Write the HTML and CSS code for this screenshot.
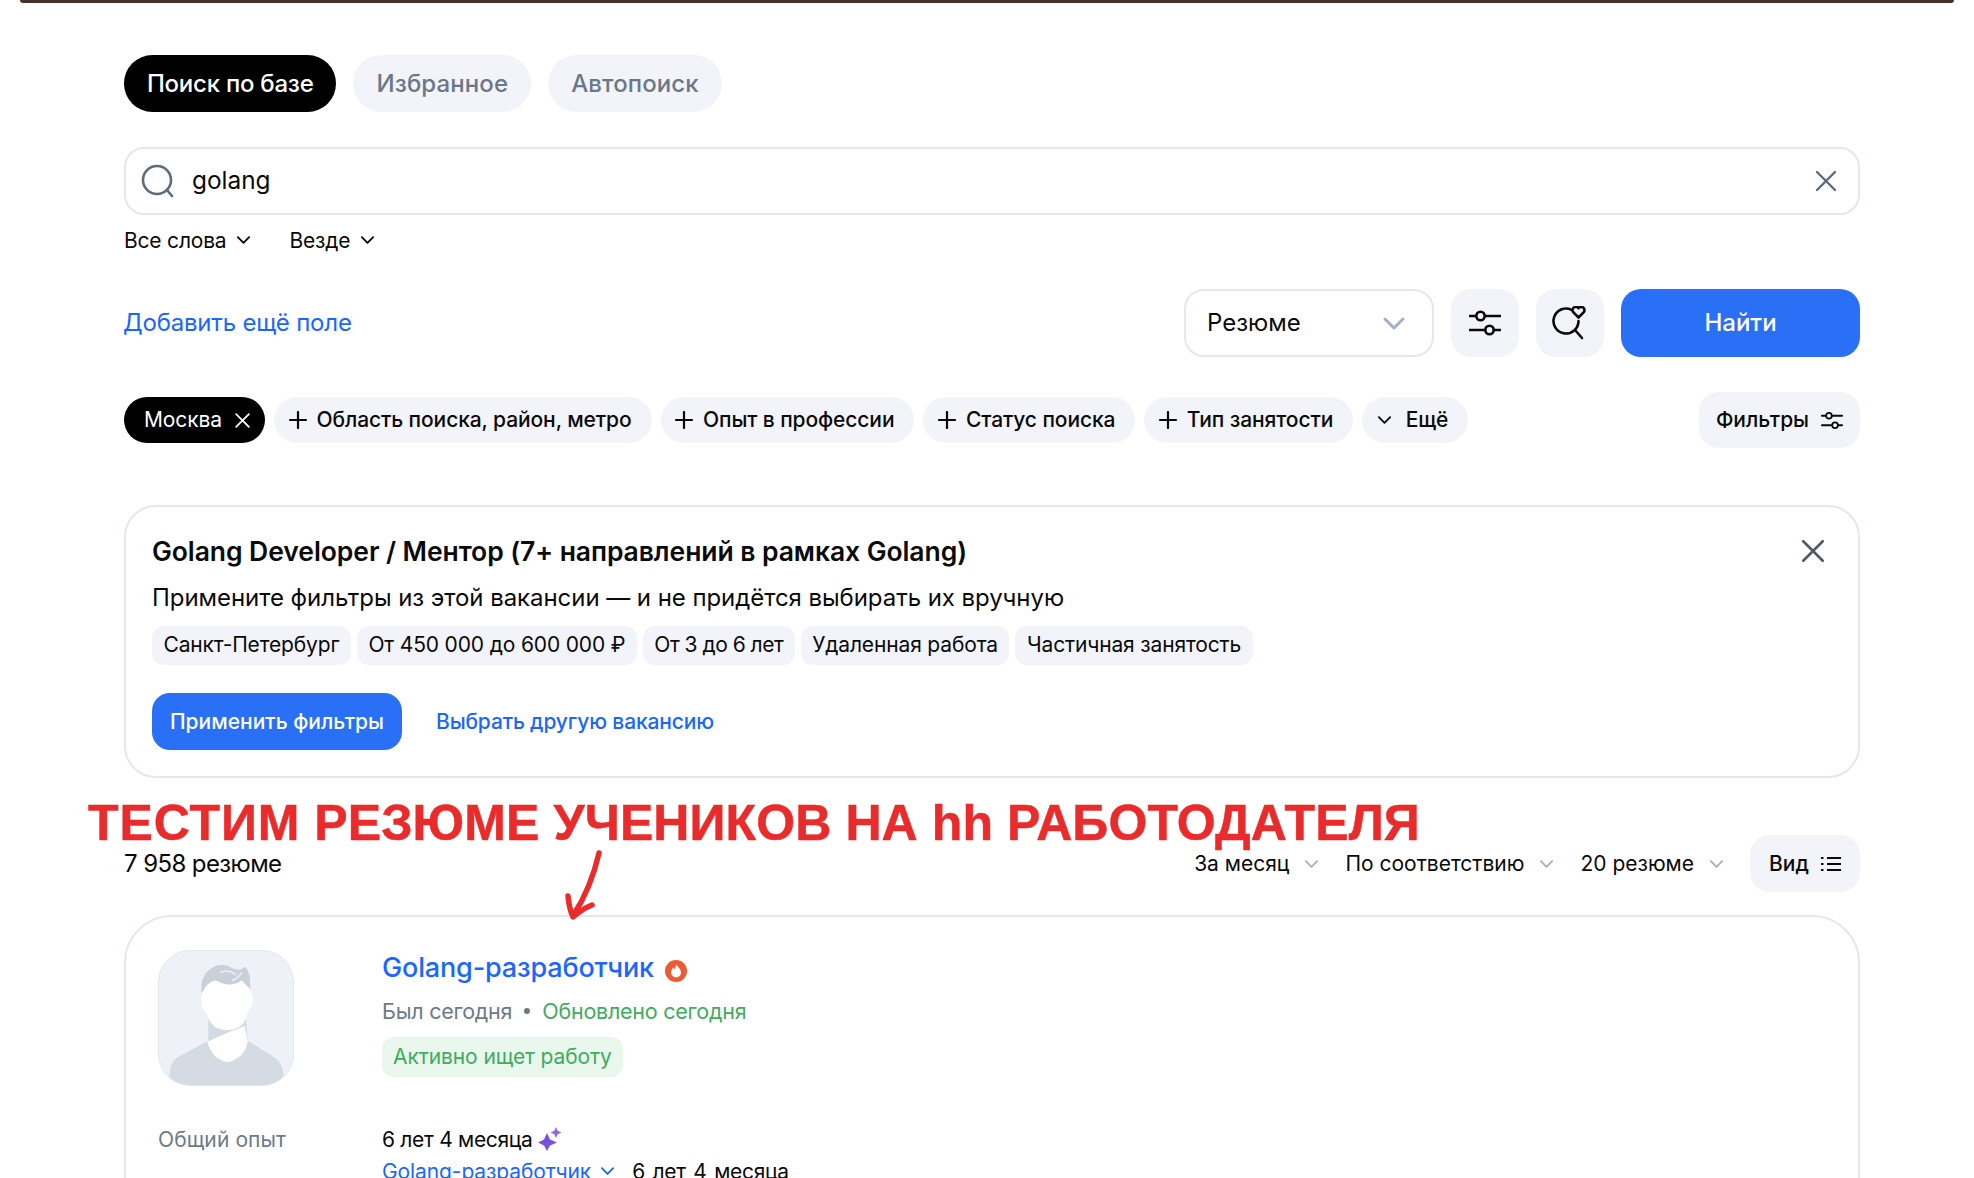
FILE: index.html
```html
<!DOCTYPE html>
<html lang="ru">
<head>
    <meta charset="UTF-8">
    <title>Поиск по базе</title>
    <link rel="stylesheet" href="styles.css">
</head>
<body>
<svg class="sprite" width="0" height="0">
    <symbol id="chev" viewBox="0 0 16 10"><path d="M2 2l6 6 6-6" fill="none" stroke="currentColor" stroke-width="2" stroke-linecap="round" stroke-linejoin="round"/></symbol>
    <symbol id="cross" viewBox="0 0 24 24"><path d="M3 3l18 18M21 3L3 21" fill="none" stroke="currentColor" stroke-width="2.4" stroke-linecap="round"/></symbol>
    <symbol id="plus" viewBox="0 0 18 18"><path d="M9 1v16M1 9h16" fill="none" stroke="currentColor" stroke-width="2.2" stroke-linecap="round"/></symbol>
    <symbol id="sliders" viewBox="0 0 32 28"><g fill="none" stroke="currentColor" stroke-width="2.6"><path d="M1 7h6M16 7h15M1 21h15M25 21h6" stroke-linecap="round"/><circle cx="11.5" cy="7" r="4.2"/><circle cx="20.5" cy="21" r="4.2"/></g></symbol>
</svg>

<div class="top-bar"></div>

<div class="page">
    <div class="tabs">
        <a class="tab tab-active">Поиск по базе</a>
        <a class="tab">Избранное</a>
        <a class="tab">Автопоиск</a>
    </div>

    <div class="search">
        <svg class="search-icon" viewBox="0 0 34 34"><g fill="none" stroke="#5d6b7b" stroke-width="2.6" stroke-linecap="round"><circle cx="16" cy="16" r="14"/><path d="M26 26l5 6"/></g></svg>
        <span class="search-text">golang</span>
        <svg class="search-clear"><use href="#cross"/></svg>
    </div>

    <div class="options">
        <span class="option">Все слова <svg class="chev-small"><use href="#chev"/></svg></span>
        <span class="option">Везде <svg class="chev-small"><use href="#chev"/></svg></span>
    </div>

    <div class="actions">
        <a class="add-field">Добавить ещё поле</a>
        <div class="select">Резюме <svg class="chev-select"><use href="#chev"/></svg></div>
        <button type="button" class="icon-btn"><svg class="icon-sliders"><use href="#sliders"/></svg></button>
        <button type="button" class="icon-btn">
            <svg class="icon-saved" viewBox="0 0 36 34"><g fill="none" stroke="#0a0a0a" stroke-width="2.6" stroke-linecap="round"><path d="M19.500 3.800A12.500 12.500 0 1 0 26.500 15"/><path d="M23 24l7 8"/><path d="M26.500 11.500l-5.300-5.300a3.100 3.100 0 0 1 5.300-4 3.100 3.100 0 0 1 5.300 4z" stroke-linejoin="round"/></g></svg>
        </button>
        <button type="button" class="find-btn">Найти</button>
    </div>

    <div class="chips">
        <span class="chip chip-city">Москва <svg class="chip-cross"><use href="#cross"/></svg></span>
        <span class="chip"><svg class="chip-plus"><use href="#plus"/></svg>Область поиска, район, метро</span>
        <span class="chip"><svg class="chip-plus"><use href="#plus"/></svg>Опыт в профессии</span>
        <span class="chip"><svg class="chip-plus"><use href="#plus"/></svg>Статус поиска</span>
        <span class="chip"><svg class="chip-plus"><use href="#plus"/></svg>Тип занятости</span>
        <span class="chip"><svg class="chip-chev"><use href="#chev"/></svg>Ещё</span>
        <button type="button" class="soft-btn filters-btn">Фильтры <svg class="icon-sliders-small"><use href="#sliders"/></svg></button>
    </div>

    <div class="card vacancy">
        <svg class="vacancy-close"><use href="#cross"/></svg>
        <div class="vacancy-title">Golang Developer / Ментор (7+ направлений в рамках Golang)</div>
        <div class="vacancy-text">Примените фильтры из этой вакансии — и не придётся выбирать их вручную</div>
        <div class="tags">
            <span class="tag">Санкт-Петербург</span>
            <span class="tag">От 450 000 до 600 000 ₽</span>
            <span class="tag tag-narrow">От 3 до 6 лет</span>
            <span class="tag">Удаленная работа</span>
            <span class="tag">Частичная занятость</span>
        </div>
        <div class="vacancy-actions">
            <button type="button" class="apply-btn">Применить фильтры</button>
            <a class="other-link">Выбрать другую вакансию</a>
        </div>
    </div>

    <div class="results">
        <span class="results-count">7 958 резюме</span>
        <span class="sort sort-period">За месяц <svg class="chev-sort"><use href="#chev"/></svg></span>
        <span class="sort">По соответствию <svg class="chev-sort"><use href="#chev"/></svg></span>
        <span class="sort">20 резюме <svg class="chev-sort"><use href="#chev"/></svg></span>
        <button type="button" class="soft-btn view-btn">Вид
            <svg class="icon-list" viewBox="0 0 20 16"><g fill="none" stroke="#0a0a0a" stroke-width="2.2"><path d="M6 2h14M6 8h14M6 14h14"/><path d="M0 2h2.500M0 8h2.500M0 14h2.500"/></g></svg>
        </button>
    </div>

    <div class="card resume">
        <div class="resume-head">
            <div class="avatar">
                <svg viewBox="0 0 136 136">
                    <path d="M50 91L22 106Q12 110 11 122L10 136H127L126 122Q124 111 114 106L90 91Z" fill="#d5dbe3"/>
                    <path d="M50 66H88L90 92 50 92Z" fill="#d5dbe3"/>
                    <path d="M49 92L72 82 87 76 90 92Q87 108 70 113 54 110 49 92Z" fill="#fff"/>
                    <path d="M43 42Q42 26 50 20 58 12 70 15 76 19 82 19L88 16 92 24 93 44 84 38 52 38Z" fill="#c9d0da"/>
                    <path d="M46 38Q52 30 58 30 72 38 84 30L92 38 95 46 95 54 90 62Q88 74 80 78 70 83 58 78 50 72 49 64 42 58 43 46Z" fill="#fff"/>
                    <path d="M62 22Q70 18 78 24M74 30Q80 28 84 22" fill="none" stroke="#eef1f7" stroke-width="1.500"/>
                </svg>
            </div>
            <div class="resume-info">
                <div class="resume-title">
                    <a>Golang-разработчик</a>
                    <svg class="icon-flame" viewBox="0 0 22 22"><circle cx="11" cy="11" r="11" fill="#ee5a36"/><path d="M11 4c.6 2.500 5 4 5 8.500a5 5 0 0 1-10 0C6 10 7.500 9 8 7.500c.7.700 1 1.200 1.200 1.900C10.300 8 11.200 6 11 4z" fill="#fff"/></svg>
                </div>
                <div class="resume-status">
                    <span>Был сегодня</span>
                    <i class="dot"></i>
                    <span class="updated">Обновлено сегодня</span>
                </div>
                <span class="active-badge">Активно ищет работу</span>
            </div>
        </div>
        <div class="resume-row">
            <div class="row-label">Общий опыт</div>
            <div class="row-value">
                6 лет 4 месяца
                <svg class="icon-stars" viewBox="0 0 24 24"><path d="M9 6l3 6.500 7 3-7 3-3 5.500-3-5.500-6-3 6-3z" fill="#7a4fe0"/><path d="M18 0l1.700 3.800L23.500 5.500 19.700 7.200 18 11l-1.700-3.800L12.500 5.500l3.800-1.700z" fill="#8d68ea"/></svg>
            </div>
        </div>
        <div class="resume-row resume-row-next">
            <div class="row-label"></div>
            <div class="row-value">
                <a class="exp-link">Golang-разработчик <svg class="chev-small"><use href="#chev"/></svg></a>
                <span class="exp-time">6 лет 4 месяца</span>
            </div>
        </div>
    </div>
</div>

<!-- пометка поверх скриншота -->
<div class="note"><span class="note-first">ТЕСТИМ</span> РЕЗЮМЕ УЧЕНИКОВ НА hh РАБОТОДАТЕЛЯ</div>
<svg class="note-arrow" viewBox="0 0 40 72"><g fill="none" stroke="#e92b2b" stroke-width="5.500" stroke-linecap="round" stroke-linejoin="round"><path d="M35 3Q27 38 9 66"/><path d="M4 46Q5 58 9 67 18 59 28 55"/></g></svg>
</body>
</html>
```

FILE: styles.css
```css
*{
    margin: 0;
    padding: 0;
    box-sizing: border-box;
}
html, body{
    height: 100%;
    overflow: hidden;
}
body{
    position: relative;
    background: #ffffff;
    color: #0a0a0a;
    font-family: Inter, "Noto Sans", sans-serif;
    font-size: 22px;
}
a{
    cursor: pointer;
}
button{
    border: none;
    font-family: inherit;
    color: inherit;
    outline: none;
}
.sprite{
    position: absolute;
}

.top-bar{
    height: 3px;
    margin: 0 20px;
    background: #43322c;
    border-radius: 0 0 4px 4px;
}
.page{
    padding: 52px 114px 0 124px;
}

.tabs{
    display: flex;
    gap: 17px;
}
.tab{
    height: 57px;
    line-height: 57px;
    padding: 0 23px;
    border-radius: 29px;
    background: #f2f4f9;
    color: #6b7788;
    font-size: 24px;
    font-weight: 500;
    letter-spacing: .1px;
}
.tab-active{
    background: #000000;
    color: #ffffff;
    letter-spacing: -.25px;
}

.search{
    display: flex;
    align-items: center;
    height: 68px;
    margin-top: 35px;
    padding: 0 20px 0 15px;
    border: 2px solid #e3e8f0;
    border-radius: 20px;
}
.search-icon{
    width: 34px;
    height: 34px;
}
.search-text{
    margin-left: 17px;
    padding-bottom: 2px;
    font-size: 24.4px;
    flex: 1;
}
.search-clear{
    width: 24px;
    height: 24px;
    color: #5d6b7b;
}

.options{
    display: flex;
    gap: 38px;
    height: 30px;
    margin-top: 10px;
    align-items: center;
    font-size: 21px;
}
.option{
    display: flex;
    align-items: center;
    gap: 10px;
    letter-spacing: -.2px;
}
.chev-small{
    width: 15px;
    height: 10px;
}

.actions{
    display: flex;
    align-items: center;
    gap: 17px;
    height: 68px;
    margin-top: 34px;
}
.add-field{
    flex: 1;
    padding-bottom: 2px;
    margin-left: -1px;
    color: #1a66ff;
    font-size: 24px;
    letter-spacing: -.2px;
}
.select{
    display: flex;
    align-items: center;
    justify-content: space-between;
    width: 250px;
    height: 68px;
    padding: 0 26px 2px 21px;
    border: 2px solid #e3e8f0;
    border-radius: 20px;
    font-size: 24px;
}
.chev-select{
    width: 24px;
    height: 15px;
    margin-top: 2px;
    color: #a3b1c2;
}
.icon-btn{
    display: flex;
    align-items: center;
    justify-content: center;
    width: 68px;
    height: 68px;
    background: #f2f4f9;
    border-radius: 20px;
}
.icon-sliders{
    width: 32px;
    height: 28px;
}
.icon-saved{
    width: 36px;
    height: 34px;
}
.find-btn{
    width: 239px;
    height: 68px;
    padding-bottom: 2px;
    background: #2970f6;
    border-radius: 20px;
    color: #ffffff;
    font-size: 24px;
    font-weight: 500;
}

.chips{
    display: flex;
    align-items: center;
    gap: 9px;
    height: 56px;
    margin-top: 35px;
}
.chip{
    display: flex;
    align-items: center;
    height: 46px;
    padding: 0 20px 2px 14.5px;
    background: #f2f4f9;
    border-radius: 23px;
    font-size: 21px;
    font-weight: 500;
    letter-spacing: -.1px;
    white-space: nowrap;
}
.chip-city{
    padding: 0 14px 2px 20px;
    background: #000000;
    color: #ffffff;
    font-weight: 400;
}
.chip-cross{
    width: 17px;
    height: 17px;
    margin: 2px 0 0 12px;
}
.chip-plus{
    width: 18px;
    height: 18px;
    margin: 2px 10px 0 0;
}
.chip-chev{
    width: 15px;
    height: 10px;
    margin: 2px 14px 0 0;
}
.soft-btn{
    display: flex;
    align-items: center;
    justify-content: center;
    height: 56px;
    background: #f2f4f9;
    border-radius: 20px;
    font-size: 21px;
    font-weight: 500;
}
.filters-btn{
    width: 161px;
    margin-left: auto;
    padding-bottom: 2px;
    gap: 12px;
}
.icon-sliders-small{
    width: 22px;
    height: 19px;
    margin-top: 2px;
}

.card{
    position: relative;
    border: 2px solid #e3e8f0;
    background: #ffffff;
}
.vacancy{
    height: 273px;
    margin-top: 57px;
    padding: 25px 26px 0 26px;
    border-radius: 32px;
}
.vacancy-close{
    position: absolute;
    top: 31px;
    right: 32px;
    width: 26px;
    height: 26px;
    color: #4e5a68;
}
.vacancy-title{
    height: 40px;
    line-height: 39px;
    font-size: 26.5px;
    font-weight: 600;
    letter-spacing: -.07px;
    white-space: nowrap;
}
.vacancy-text{
    height: 40px;
    margin-top: 6px;
    line-height: 40px;
    font-size: 24px;
    letter-spacing: -.06px;
}
.tags{
    display: flex;
    gap: 6px;
    margin-top: 8px;
}
.tag{
    height: 39px;
    line-height: 38px;
    padding: 0 11.5px;
    background: #f2f4f9;
    border-radius: 12px;
    font-size: 21px;
    letter-spacing: -.15px;
}
.tag-narrow{
    letter-spacing: -.5px;
}
.vacancy-actions{
    display: flex;
    align-items: center;
    gap: 34px;
    margin-top: 28px;
}
.apply-btn{
    width: 250px;
    height: 57px;
    background: #2970f6;
    border-radius: 18px;
    color: #ffffff;
    font-size: 21px;
    font-weight: 500;
}
.other-link{
    color: #1a66ff;
    font-size: 21px;
    font-weight: 500;
    letter-spacing: -.15px;
}

.results{
    display: flex;
    align-items: center;
    height: 57px;
    margin-top: 57px;
    font-size: 21px;
}
.results-count{
    flex: 1;
    font-size: 24px;
    letter-spacing: -.6px;
}
.sort{
    display: flex;
    align-items: center;
    gap: 15px;
    margin-right: 26px;
}
.chev-sort{
    width: 15px;
    height: 10px;
    color: #a3b1c2;
}
.view-btn{
    width: 110px;
    height: 57px;
    gap: 12px;
}
.icon-list{
    width: 20px;
    height: 16px;
}

.resume{
    height: 400px;
    margin-top: 23px;
    padding: 33px 32px 0 32px;
    border-radius: 48px;
}
.resume-head{
    display: flex;
}
.avatar{
    width: 136px;
    height: 136px;
    background: #eef1f7;
    border: 1px solid #e3e8f0;
    border-radius: 32px;
    overflow: hidden;
}
.avatar svg{
    display: block;
    width: 100%;
    height: 100%;
}
.resume-info{
    margin-left: 88px;
}
.resume-title{
    display: flex;
    align-items: center;
    height: 40px;
    margin-top: -3px;
    font-size: 27px;
    font-weight: 500;
    letter-spacing: -.15px;
    color: #1a66ff;
}
.icon-flame{
    width: 22px;
    height: 22px;
    margin: 7px 0 0 11px;
}
.resume-status{
    display: flex;
    align-items: center;
    height: 30px;
    margin-top: 9px;
    color: #6d7a8a;
    font-size: 21.5px;
    letter-spacing: -.25px;
}
.dot{
    width: 6px;
    height: 6px;
    margin: 0 12px;
    border-radius: 50%;
    background: #6d7a8a;
}
.updated{
    color: #3fac5f;
}
.active-badge{
    display: inline-block;
    height: 40px;
    line-height: 39px;
    margin-top: 11px;
    padding: 0 11px;
    background: #e9f7ed;
    border-radius: 12px;
    color: #3fac5f;
    font-size: 21px;
    letter-spacing: -.1px;
}
.resume-row{
    display: flex;
    align-items: center;
    height: 30px;
    margin-top: 38px;
    font-size: 21px;
    letter-spacing: -.3px;
}
.resume-row-next{
    margin-top: 2px;
    letter-spacing: -.1px;
}
.row-label{
    width: 224px;
    color: #6d7a8a;
    letter-spacing: .1px;
}
.row-value{
    display: flex;
    align-items: center;
    gap: 5px;
}
.icon-stars{
    width: 24px;
    height: 24px;
}
.exp-link{
    display: flex;
    align-items: center;
    gap: 9px;
    margin-right: 12px;
    color: #1a66ff;
}
.exp-time{
    letter-spacing: -.3px;
    word-spacing: 2px;
}

.note{
    position: absolute;
    left: 88px;
    top: 793px;
    font-family: "Liberation Sans", Arial, sans-serif;
    font-size: 50px;
    line-height: 60px;
    font-weight: 700;
    letter-spacing: .1px;
    -webkit-text-stroke: .5px #e92b2b;
    color: #e92b2b;
    white-space: nowrap;
}
.note-first{
    letter-spacing: .9px;
}
.note-arrow{
    position: absolute;
    left: 564px;
    top: 850px;
    width: 40px;
    height: 72px;
}
```
